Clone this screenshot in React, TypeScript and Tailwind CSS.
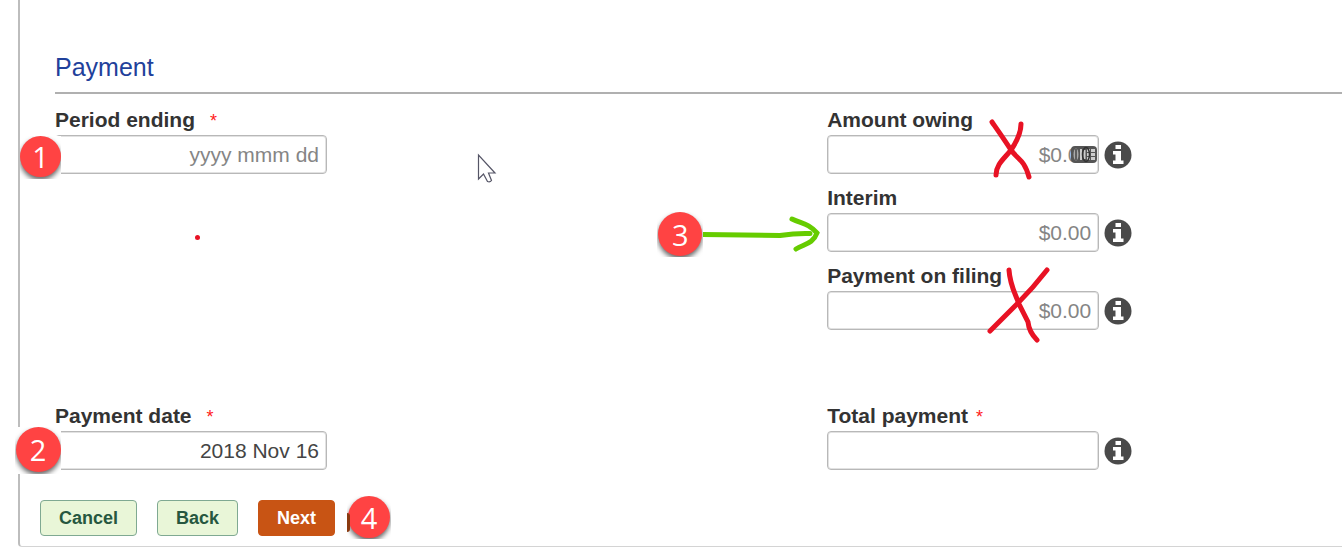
import { ReactNode } from "react";

interface BadgeProps {
  className: string;
  circle: string;
  children: ReactNode;
}

// Numbered step marker, the white box hides what is under it
const Badge = ({ className, circle, children }: BadgeProps) => {
  return (
    <div className={`absolute z-10 flex justify-center overflow-hidden bg-white ${className}`}>
      <span
        className={`flex items-center justify-center rounded-full bg-[#ff4343] font-['Open_Sans',sans-serif] text-[29px] leading-none font-normal text-white shadow-[0_3px_5px_rgba(0,0,0,0.6)] ${circle}`}
      >
        {children}
      </span>
    </div>
  );
};

const InfoIcon = () => {
  return (
    <svg width="28" height="28" viewBox="0 0 28 28">
      <circle cx="14" cy="14" r="13.5" fill="#4a4a4a" />
      <path d="M11.5 4h5.500v4h-5.500zM9 10h8v9.500h2.500v3.500H9v-3.500h2.500v-6H9z" fill="#fff" />
    </svg>
  );
};

interface FieldProps {
  id: string;
  label: string;
  required?: string;
  placeholder?: string;
  defaultValue?: string;
  info?: boolean;
  children?: ReactNode;
}

const Field = ({ id, label, required, placeholder, defaultValue, info, children }: FieldProps) => {
  return (
    <div className="relative">
      <label htmlFor={id} className="block text-[21px] leading-6 font-bold text-[#333]">
        {label}
        {required && <span className={`text-[18px] leading-none font-normal text-[#ff2020] ${required}`}>*</span>}
      </label>
      <div className="mt-[3px] flex items-center gap-[5px]">
        <input
          id={id}
          type="text"
          placeholder={placeholder}
          defaultValue={defaultValue}
          className="h-[39px] w-[272px] rounded-[4px] border border-[#b8b8b8] bg-white px-[7px] text-right text-[21px] text-[#444] shadow-[inset_0_0_0_1px_#e2e2e2] placeholder:text-[#858585]"
        />
        {info && (
          <button type="button" aria-label={`About ${label}`}>
            <InfoIcon />
          </button>
        )}
      </div>
      {children}
    </div>
  );
};

const App = () => {
  return (
    <div className="bg-white pl-[18px] font-['Liberation_Sans',Arial,sans-serif]">
      <main className="rounded-bl-[4px] border-b border-l-2 border-b-[#d4d4d4] border-l-[#bdbdbd] pb-2.5">
        <div className="pt-[53px] pl-[35px]">
          <h2 className="border-b-2 border-[#b0b0b0] pb-[11px] text-[25px] leading-7 text-[#1f419b]">
            Payment
          </h2>

          <div className="mt-3.5 grid grid-cols-[3fr_2fr]">
            <div className="relative">
              <Field id="period" label="Period ending" required="ml-[15px]" placeholder="yyyy mmm dd">
                <Badge className="top-7 -left-[35px] h-[43px] w-[41px]" circle="h-[41px] w-[41px]">1</Badge>
              </Field>
              <span className="absolute top-[127px] left-[140px] h-[5px] w-[5px] rounded-full bg-[#e81224]" />
            </div>

            <div className="flex flex-col gap-3">
              <Field id="owing" label="Amount owing" placeholder="$0.00" info>
                {/* autofill icon */}
                <svg className="absolute top-[38px] left-[244px]" width="26" height="17" viewBox="0 0 26 17">
                  <rect width="26" height="17" rx="4" fill="#555" />
                  <ellipse cx="5" cy="8.500" rx="2.500" ry="6" fill="#aaa" />
                  <path d="M5 3v11" stroke="#444" strokeWidth="1.500" />
                  <path d="M9 3h2v11H9zM12.500 4h2v9h-2zM16 3h3v3h-3zM20 3h4v3h-4zM16 7h3v3h-3zM20 7h4v3h-4zM16 11h3v3h-3zM20 11h4v3h-4z" fill="#ccc" />
                  <ellipse cx="15" cy="8.500" rx="3.500" ry="7" fill="none" stroke="#333" strokeWidth="1.500" />
                </svg>
                <svg className="absolute top-2 left-[160px]" width="50" height="70" viewBox="987 116 50 70" fill="none" stroke="#e81224" strokeWidth="5" strokeLinecap="round">
                  <path d="M992 122C999 132 1004 139 1011 150C1018 160 1024 159 1029 177" />
                  <path d="M1021 124C1021 133 1017 141 1011 150C1005 158 996 164 996 175" />
                </svg>
              </Field>
              <Field id="interim" label="Interim" placeholder="$0.00" info>
                <Badge className="top-[26px] -left-[170px] h-[45px] w-[46px]" circle="h-[44px] w-[44px]">3</Badge>
                <svg className="absolute top-[26px] -left-[125px]" width="120" height="45" viewBox="702 212 120 45" fill="none" stroke="#66cc00" strokeWidth="5" strokeLinecap="round">
                  <path d="M703 234.500L780 235.500Q796 233 810 233.500" strokeLinecap="butt" />
                  <path d="M808 233.500h2M792 219C802 224 808 223 817 233C813 244 804 244 796 249" />
                </svg>
              </Field>
              <Field id="filing" label="Payment on filing" placeholder="$0.00" info>
                <svg className="absolute -top-1 left-[156px]" width="70" height="90" viewBox="983 260 70 90" fill="none" stroke="#e81224" strokeWidth="5" strokeLinecap="round">
                  <path d="M1009 270C1010 286 1016 295 1019 304L1028 322Q1029 332 1037 340" />
                  <path d="M1047 270Q1033 288 1018 303L990 331" />
                </svg>
              </Field>
            </div>
          </div>

          <div className="mt-[74px] grid grid-cols-[3fr_2fr]">
            <Field id="date" label="Payment date" required="ml-[15px]" defaultValue="2018 Nov 16">
              <Badge className="top-[23px] -left-10 h-[47px] w-[46px]" circle="h-[45px] w-[45px]">2</Badge>
            </Field>
            <Field id="total" label="Total payment" required="ml-2" info />
          </div>
        </div>

        <div className="mt-[30px] ml-5 flex gap-5 text-[18px] leading-[34px] font-bold">
          <button type="button" className="rounded-[4px] border border-[#7fa992] bg-[#e9f6d8] px-[18px] text-[#26573f]">
            Cancel
          </button>
          <button type="button" className="rounded-[4px] border border-[#7fa992] bg-[#e9f6d8] px-[18px] text-[#26573f]">
            Back
          </button>
          <div className="relative">
            <button type="button" className="rounded-[4px] border border-[#c85414] bg-[#c85414] px-[18px] text-white">
              Next
            </button>
            <Badge className="-top-1 left-[89px] h-[43px] w-11" circle="h-[42px] w-[42px]">
              4
            </Badge>
            <span className="absolute top-[13px] left-[89px] z-10 h-[19px] w-[3px] rounded-r-full bg-[#8a3a10]" />
          </div>
        </div>
      </main>

      {/* mouse pointer */}
      <svg className="absolute top-[153px] left-[476px]" width="22" height="32" viewBox="0 0 22 32">
        <path d="M2.500 2v24l5-5 4 7.500q2.500 1 4-1l-3-7.500h6.500z" fill="#fff" stroke="#555566" strokeWidth="1.200" />
      </svg>
    </div>
  );
};

export default App;
